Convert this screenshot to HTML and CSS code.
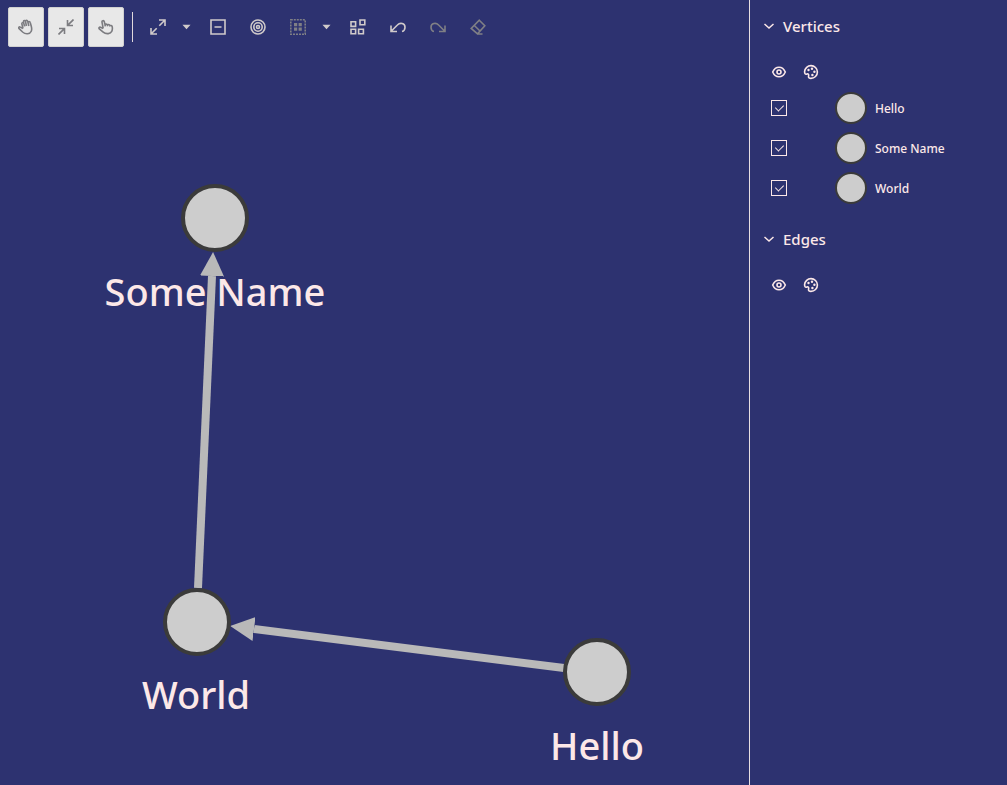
FILE: index.html
```
<!DOCTYPE html>
<html lang="en">
<head>
    <meta charset="UTF-8">
    <meta name="viewport" content="width=device-width, initial-scale=1.0">
    <title>Graph Visualization</title>
    <link rel="stylesheet" href="styles.css">
</head>
<body>
    <!-- Shared icon shapes -->
    <svg class="icon-defs" aria-hidden="true">
        <symbol id="icon-eye" viewBox="0 0 16 16">
            <path d="M1.700 8C3 5 5.400 3.200 8 3.200S13 5 14.300 8C13 11 10.600 12.800 8 12.800S3 11 1.700 8Z"/>
            <circle cx="8" cy="8" r="2"/>
        </symbol>
        <symbol id="icon-palette" viewBox="0 0 16 16">
            <path d="M1.600 7.400C1.800 4.200 4.700 1.600 8 1.600c3.500 0 6.400 2.800 6.400 6.400S11.500 14.400 8 14.400c-1.700 0-2.700-.8-2.500-2 .2-1 .5-1.600-.1-2.200-.6-.6-1.200-.2-2 0-1.200.2-1.900-1-1.800-2.800Z"/>
            <g class="dots"><circle cx="5.500" cy="6" r="1.200"/><circle cx="9" cy="4.800" r="1.200"/><circle cx="11.400" cy="7.800" r="1.200"/><circle cx="9.400" cy="11" r="1.200"/></g>
        </symbol>
        <symbol id="icon-chevron" viewBox="0 0 12 12">
            <path d="M1.500 4 6 8l4.500-4"/>
        </symbol>
        <symbol id="icon-caret" viewBox="0 0 10 6">
            <path class="fill" d="M.5 .5h9L5 5.500Z"/>
        </symbol>
    </svg>

    <div class="app">
        <main class="workspace">
            <div class="toolbar" role="toolbar" aria-label="Graph tools">
                <button class="tool toggled" aria-label="Move and zoom" aria-pressed="true">
                    <svg class="icon" viewBox="0 0 16 16"><path d="M5 9.500 3.900 5c-.3-1.500 1.500-1.700 1.900-.4L6.600 7.400M5.800 4.600l-.3-1.800c-.2-1.500 1.700-1.800 2-.4L8.400 7M7.500 2.400c0-1.500 1.900-1.500 2.200-.1L10.800 7M10 3.400c.3-1.300 1.900-1.200 2.200.1l1 3.500c1.200 4 .2 7.300-3.700 7.700-2.300.2-3.500-.5-4.900-1.700L1.100 9.700c-1-1 .1-2.300 1.300-1.600L5 9.500"/></svg>
                </button>
                <button class="tool toggled" aria-label="Fit to screen" aria-pressed="true">
                    <svg class="icon" viewBox="0 0 16 16"><path d="M15.500 .5 9.600 6.400M9.500 1v5.500H15M.5 15.500l5.900-5.900M1 9.500h5.500V15"/></svg>
                </button>
                <button class="tool toggled" aria-label="Sticky mode" aria-pressed="true">
                    <svg class="icon" viewBox="0 0 16 16"><path d="M5.200 9.500 4 3.200C3.700 1.500 5.900 1.100 6.300 2.700L7.300 7.400M6.900 6c.3-1.200 2.200-1.200 2.500.1l.3 1.100M9.300 6.200c.4-1.100 2.200-1 2.500.2l.3 1.100M11.800 7c.6-.9 2.100-.5 2.400.7.7 3.700-.6 6.400-3.900 6.900-2.200.3-3.700-.3-5.100-1.500L1.300 9.900C.4 8.800 1.500 7.700 2.600 8.300l2.600 1.200"/></svg>
                </button>
                <span class="separator"></span>
                <div class="split">
                    <button class="tool" aria-label="Expand">
                        <svg class="icon" viewBox="0 0 16 16"><path d="M9.300 6.700 14.500 1.500M9 1h6v6M6.700 9.300 1.500 14.500M1 9v6h6"/></svg>
                    </button>
                    <button class="drop" aria-label="Expand options"><svg class="caret"><use href="#icon-caret"/></svg></button>
                </div>
                <button class="tool" aria-label="Drop selected">
                    <svg class="icon" viewBox="0 0 16 16"><path d="M1 1h14v14H1ZM4.500 8h7"/></svg>
                </button>
                <button class="tool" aria-label="Focus">
                    <svg class="icon" viewBox="0 0 16 16"><circle cx="8" cy="8" r="7"/><circle cx="8" cy="8" r="4.200"/><circle cx="8" cy="8" r="1.500"/></svg>
                </button>
                <div class="split">
                    <button class="tool disabled" aria-label="Group" disabled>
                        <svg class="icon" viewBox="0 0 16 16"><path class="dashed" d="M.8 .8h14.400v14.400H.8Z"/><path class="fill" d="M4 4h3.200v3.200H4ZM8.600 4h3.200v3.200H8.600ZM4 8.600h3.200v3.200H4ZM8.600 8.600h3.200v3.200H8.600Z"/></svg>
                    </button>
                    <button class="drop" aria-label="Group options"><svg class="caret"><use href="#icon-caret"/></svg></button>
                </div>
                <button class="tool" aria-label="Ungroup">
                    <svg class="icon" viewBox="0 0 16 16"><path d="M1 2.800h4.600v4.600H1ZM10 1h4.800v4.800H10ZM1 10.200h4.600v4.600H1ZM8.600 10.200h4.800v4.600H8.600Z"/></svg>
                </button>
                <button class="tool" aria-label="Undo">
                    <svg class="icon" viewBox="0 0 16 16"><path d="M1 6.500v6h6M1.200 12.300 7.400 6C10 3.200 15 4 15 8.200c0 2-1.100 3.800-3 4.300"/></svg>
                </button>
                <button class="tool disabled" aria-label="Redo" disabled>
                    <svg class="icon" viewBox="0 0 16 16"><path d="M15 6.500v6H9M14.800 12.300 8.600 6C6 3.200 1 4 1 8.200c0 2 1.100 3.800 3 4.300"/></svg>
                </button>
                <button class="tool disabled" aria-label="Reset" disabled>
                    <svg class="icon" viewBox="0 0 16 16"><path d="M9.300 1.200 14.800 6.700 7.500 14.800 1.200 9.400ZM4.300 6.500 10 12M7 15h5.500"/></svg>
                </button>
            </div>

            <svg class="graph" role="img" aria-label="Graph of three vertices">
                <defs>
                    <marker id="arrow" viewBox="0 0 24 24" markerWidth="24" markerHeight="24" markerUnits="userSpaceOnUse" refX="0" refY="12" orient="auto">
                        <path class="arrow-head" d="M0 0 24 12 0 24Z"/>
                    </marker>
                </defs>
                <g class="labels">
                    <text x="215" y="252">Some Name</text>
                    <text x="196" y="655">World</text>
                    <text x="597" y="706">Hello</text>
                </g>
                <g class="edges">
                    <line x1="198" y1="534" x2="212" y2="222" marker-end="url(#arrow)"/>
                    <line x1="564" y1="614" x2="254" y2="575" marker-end="url(#arrow)"/>
                </g>
                <g class="nodes">
                    <circle cx="215" cy="164" r="32"/>
                    <circle cx="197" cy="568" r="32"/>
                    <circle cx="597" cy="618" r="32"/>
                </g>
            </svg>
        </main>

        <aside class="legend">
            <section class="legend-section">
                <h2><button class="legend-title" aria-expanded="true"><svg class="chevron"><use href="#icon-chevron"/></svg>Vertices</button></h2>
                <div class="legend-row legend-head">
                    <svg class="icon"><use href="#icon-eye"/></svg>
                    <svg class="icon"><use href="#icon-palette"/></svg>
                </div>
                <div class="legend-row">
                    <input type="checkbox" id="v-hello" checked>
                    <span class="swatch"></span>
                    <label for="v-hello">Hello</label>
                </div>
                <div class="legend-row">
                    <input type="checkbox" id="v-some-name" checked>
                    <span class="swatch"></span>
                    <label for="v-some-name">Some Name</label>
                </div>
                <div class="legend-row">
                    <input type="checkbox" id="v-world" checked>
                    <span class="swatch"></span>
                    <label for="v-world">World</label>
                </div>
            </section>
            <section class="legend-section">
                <h2><button class="legend-title" aria-expanded="true"><svg class="chevron"><use href="#icon-chevron"/></svg>Edges</button></h2>
                <div class="legend-row legend-head">
                    <svg class="icon"><use href="#icon-eye"/></svg>
                    <svg class="icon"><use href="#icon-palette"/></svg>
                </div>
            </section>
        </aside>
    </div>
</body>
</html>
```
FILE: styles.css
```
* {
    margin: 0;
    padding: 0;
    box-sizing: border-box;
}

body {
    font-family: "Noto Sans", "Open Sans", sans-serif;
    font-size: 12px;
    font-weight: 500;
    background: #2d3270;
    color: #fce8e8;
}

button {
    border: none;
    background: none;
    color: inherit;
    font: inherit;
    cursor: pointer;
}

.icon-defs {
    display: none;
}

.app {
    display: flex;
    min-height: 100vh;
}

.workspace {
    flex: 1;
    min-width: 0;
    display: flex;
    flex-direction: column;
}

/* Toolbar */
.toolbar {
    display: flex;
    align-items: center;
    gap: 4px;
    padding: 7px 8px;
    color: #d0caca;
}

.tool,
.drop {
    display: flex;
    align-items: center;
    justify-content: center;
    width: 36px;
    height: 40px;
}

.drop {
    width: 20px;
}

.toggled {
    background: #e8e8e8;
    border: 1px solid #d0d0d0;
    border-radius: 2px;
    color: #7c7c80;
}

.disabled {
    color: #7f7f85;
    cursor: default;
}

.separator {
    width: 1px;
    height: 30px;
    margin: 0 3px 0 4px;
    background: #e0d8dc;
}

.split {
    display: flex;
}

.icon {
    width: 16px;
    height: 16px;
    fill: none;
    stroke: currentColor;
    stroke-width: 1.6;
}

.caret {
    width: 9px;
    height: 6px;
}

.fill,
.dots {
    fill: currentColor;
    stroke: none;
}

.dashed {
    stroke-dasharray: 2 1;
}

/* Graph */
.graph {
    flex: 1;
    width: 100%;
    min-height: 720px;
}

.nodes circle {
    fill: #cdcdcd;
    stroke: #3b3b3b;
    stroke-width: 4;
}

.edges line {
    stroke: #b9b9b9;
    stroke-width: 8;
}

.arrow-head {
    fill: #b9b9b9;
}

.labels text {
    fill: #fce8e8;
    font-size: 38px;
    text-anchor: middle;
}

/* Legend */
.legend {
    width: 258px;
    padding-left: 13px;
    border-left: 1px solid #e8dfe2;
}

.legend-section {
    margin-bottom: 5px;
}

.legend-title {
    display: flex;
    align-items: center;
    gap: 8px;
    height: 52px;
    margin-bottom: 4px;
    font-size: 15px;
    font-weight: 500;
}

.chevron {
    width: 12px;
    height: 12px;
    fill: none;
    stroke: currentColor;
    stroke-width: 1.5;
}

.legend-row {
    display: grid;
    grid-template-columns: 32px 32px 32px 1fr;
    align-items: center;
    height: 40px;
}

.legend-head {
    height: 32px;
}

.legend-head .icon {
    margin-left: 8px;
}

.legend-row input {
    appearance: none;
    display: flex;
    justify-content: center;
    width: 16px;
    height: 16px;
    margin-left: 8px;
    border: 1px solid #fce8e8;
    cursor: pointer;
}

.legend-row input:checked::before {
    content: "";
    width: 4px;
    height: 7px;
    margin-top: 2px;
    border: solid #fce8e8;
    border-width: 0 1px 1px 0;
    transform: rotate(45deg);
}

.swatch {
    grid-column: 3;
    width: 32px;
    height: 32px;
    margin-left: 8px;
    border: 2px solid #3b3b3b;
    border-radius: 50%;
    background: #cdcdcd;
}

.legend-row label {
    margin-left: 16px;
}
```
